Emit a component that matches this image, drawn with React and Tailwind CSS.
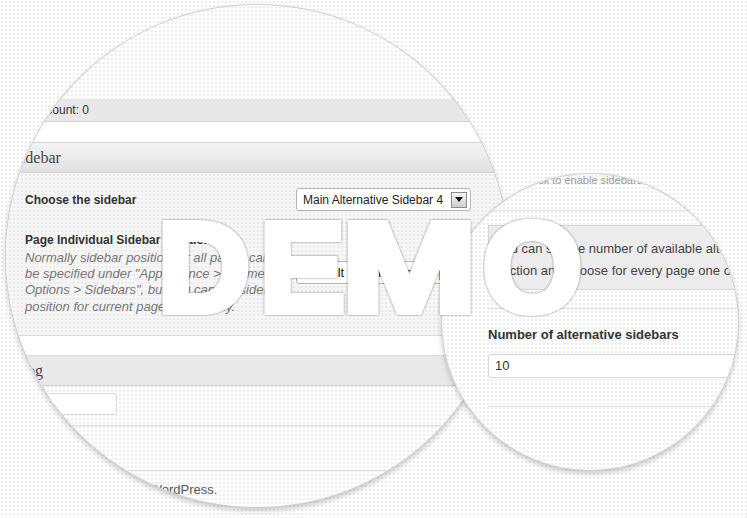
import React from 'react';

const DOTS = 'bg-[radial-gradient(#e3e3e3_0.6px,transparent_0.9px)] bg-[length:4px_4px]';

const Select = ({ value, className = '' }) => (
  <div className={`flex h-[23px] w-[175px] shrink-0 items-center justify-between rounded-[3px] border border-[#b5b5b5] bg-white pl-[6px] pr-[3px] text-[#222] ${className}`}>
    <span className="whitespace-nowrap">{value}</span>
    <span className="flex h-[16px] w-[16px] items-center justify-center border border-[#8c8c8c] bg-linear-to-b from-[#f6f6f6] to-[#cdcdcd]">
      <svg width="8" height="5" viewBox="0 0 8 5">
        <path d="M0 0h8L4 5z" fill="#111" />
      </svg>
    </span>
  </div>
);

const BigLens = () => (
  <div className={`absolute left-[6px] top-[5px] h-[502px] w-[502px] overflow-hidden rounded-full bg-white ring-1 ring-[#d0d0d0] shadow-[0_3px_6px_rgba(0,0,0,0.25)] ${DOTS}`}>
    <div className="-ml-[6px] -mt-[5px] flex w-[520px] flex-col pt-[99px]">
      <div className="flex h-[23px] items-center border-b border-[#d2d2d2] bg-[#e8e8e8] text-[12px] text-[#333]">
        <span className="-ml-[9px] whitespace-nowrap">Comment count: 0</span>
      </div>
      <div className="h-[20px] bg-white" />
      <div className="flex h-[31px] items-center border-y border-[#d2d2d2] bg-linear-to-b from-[#f3f3f3] to-[#e2e2e2] pl-[12px] font-['Liberation_Serif',serif] text-[16px] text-[#464646]">
        Sidebar
      </div>

      <div className={`flex h-[163px] flex-col border-b border-[#dcdcdc] bg-[#f6f6f6] ${DOTS}`}>
        <div className="mt-[15px] flex h-[23px] items-center">
          <div className="w-[296px] shrink-0 pl-[25px] text-[12px] font-bold text-[#333]">Choose the sidebar</div>
          <Select value="Main Alternative Sidebar 4" className="text-[12px]" />
        </div>
        <div className="mt-[21px] flex items-start">
          <div className="w-[296px] shrink-0 pl-[25px]">
            <p className="whitespace-nowrap text-[12px] font-bold leading-[16.5px] text-[#333]">Page Individual Sidebar Position</p>
            <p className="mt-[1px] whitespace-nowrap text-[13px] italic leading-[16.4px] text-[#777]">
              Normally sidebar position for all pages can<br />
              be specified under "Appearance &gt; Theme<br />
              Options &gt; Sidebars", but you can set sidebar<br />
              position for current page individually.
            </p>
          </div>
          <Select value="Default (As in Theme Options)" className="mt-[29px] text-[13px]" />
        </div>
        <div className="mt-[1px] pl-[443px] text-[13px] leading-[14px] text-[#555]">,</div>
      </div>

      <div className="h-[20px] border-b border-[#dcdcdc] bg-white" />
      <div className="flex h-[30px] items-center border-b border-[#d2d2d2] bg-[#e9e9e9] pl-[12px] font-['Liberation_Serif',serif] text-[16px] text-[#464646]">
        Blog
      </div>
      <div className="h-[40px] border-b border-[#dcdcdc] pt-[7px]">
        <div className="ml-[12px] h-[22px] w-[105px] rounded-[3px] border border-[#dadada] bg-white" />
      </div>
      <div className="h-[45px] border-b border-[#dcdcdc]" />
      <div className="mt-[11px] -ml-[10px] whitespace-nowrap text-[13px] leading-[16px] text-[#555]">
        Thank you for creating with WordPress.
      </div>
    </div>
  </div>
);

const SmallLens = () => (
  <div className={`absolute left-[442px] top-[174px] h-[296px] w-[296px] overflow-hidden rounded-full bg-white ring-1 ring-[#d0d0d0] shadow-[0_3px_6px_rgba(0,0,0,0.25)] ${DOTS}`}>
    <div className="ml-[46px] flex w-[300px] flex-col">
      <div className="h-[37px] border-b border-[#e0e0e0] pl-[30px] text-[11px] leading-[12px] text-[#999]">
        Check to enable sidebars
      </div>
      <div className="mt-[14px] h-[65px] whitespace-nowrap border border-[#d8d8d8] bg-[#ececec] pl-[7px] pt-[12px] text-[13px] leading-[22px] text-[#444]">
        You can set the number of available alternative sidebars in this<br />
        section and choose for every page one of them.
      </div>
      <div className="h-[19px] border-b border-[#e0e0e0]" />
      <div className="mt-[18px] text-[13px] font-bold leading-[16px] text-[#333]">Number of alternative sidebars</div>
      <div className="mt-[11px] flex h-[24px] w-[280px] items-center rounded-[3px] border border-[#d8d8d8] bg-white pl-[6px] text-[13px] text-[#333]">
        10
      </div>
      <div className="h-[29px] border-b border-[#e0e0e0]" />
    </div>
  </div>
);

const Watermark = () => (
  <div className="pointer-events-none absolute inset-0 font-['Liberation_Sans',Arial,sans-serif] text-[127px] font-bold leading-none text-white [-webkit-text-stroke:8px_white] drop-shadow-[0_0_1px_rgba(0,0,0,0.45)]">
    <span className="absolute left-[158px] top-[204px]">D</span>
    <span className="absolute left-[260px] top-[204px]">E</span>
    <span className="absolute left-[342px] top-[204px] origin-left scale-x-[1.27]">M</span>
    <span className="absolute left-[483px] top-[204px]">O</span>
  </div>
);

export default function App() {
  return (
    <div className={`relative h-[518px] w-[747px] overflow-hidden bg-white font-['Liberation_Sans',Arial,sans-serif] ${DOTS}`}>
      <BigLens />
      <SmallLens />
      <Watermark />
    </div>
  );
}
